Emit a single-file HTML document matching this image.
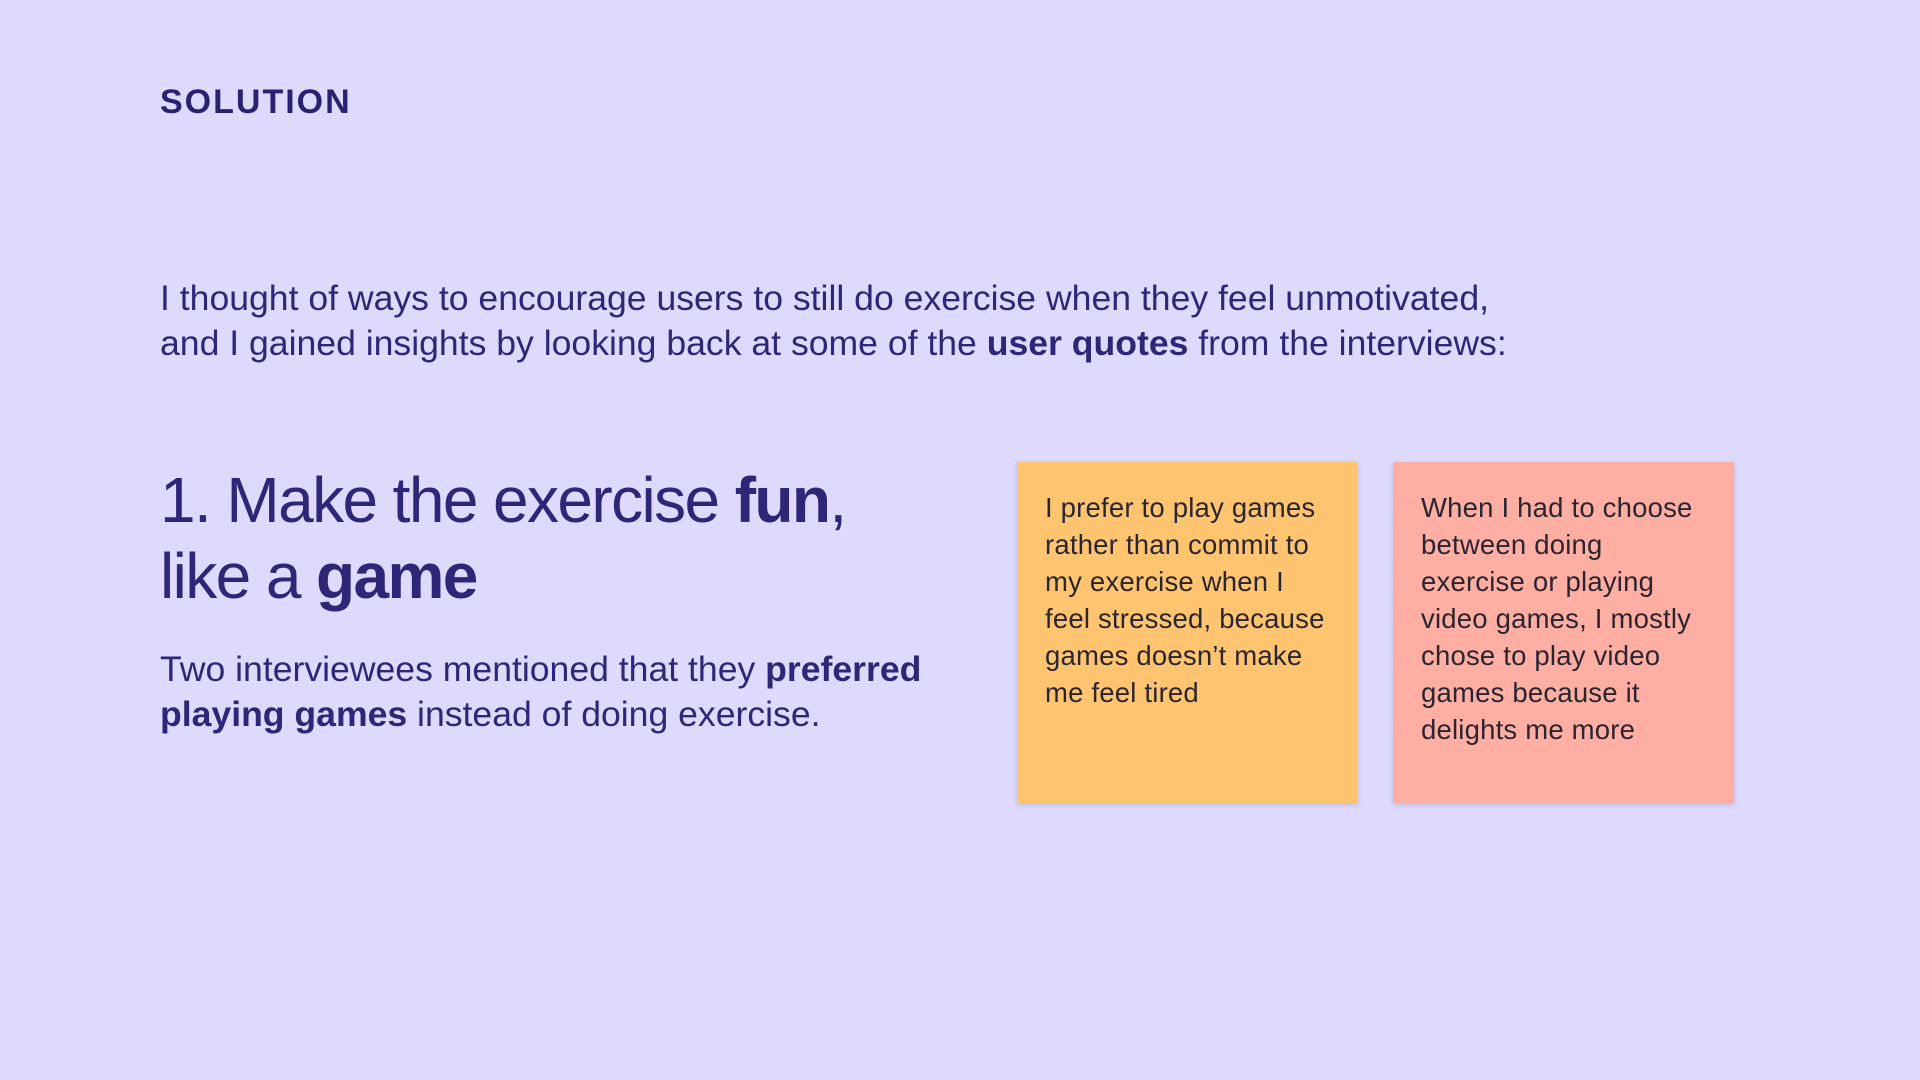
<!DOCTYPE html>
<html><head><meta charset="utf-8"><style>
html,body{margin:0;padding:0}
body{width:1920px;height:1080px;background:#dedafe;font-family:"Liberation Sans",sans-serif;color:#2e2677;position:relative;overflow:hidden}
.t{position:absolute;left:160px;top:83px;font-size:34px;font-weight:bold;letter-spacing:2px;color:#2a2170}
.p{position:absolute;left:160px;top:276px;font-size:35.6px;line-height:45px;white-space:nowrap}
.h{position:absolute;left:160px;top:462px;font-size:64px;line-height:76px;letter-spacing:-1.6px;white-space:nowrap}
.s{position:absolute;left:160px;top:647px;font-size:35.6px;line-height:45px;white-space:nowrap}
.n{position:absolute;top:462px;width:341px;height:341px;box-sizing:border-box;padding:27px 28px;font-size:27.5px;letter-spacing:0.2px;line-height:37px;color:#2b2530;box-shadow:0 2px 5px rgba(0,0,0,0.15)}
b{font-weight:bold}
</style></head><body>
<div class="t">SOLUTION</div>
<div class="p">I thought of ways to encourage users to still do exercise when they feel unmotivated,<br>and I gained insights by looking back at some of the <b>user quotes</b> from the interviews:</div>
<div class="h">1. Make the exercise <b>fun</b>,<br>like a <b>game</b></div>
<div class="s">Two interviewees mentioned that they <b>preferred</b><br><b>playing games</b> instead of doing exercise.</div>
<div class="n" style="left:1017px;background:#fec470">I prefer to play games<br>rather than commit to<br>my exercise when I<br>feel stressed, because<br>games doesn’t make<br>me feel tired</div>
<div class="n" style="left:1393px;background:#feaea2">When I had to choose<br>between doing<br>exercise or playing<br>video games, I mostly<br>chose to play video<br>games because it<br>delights me more</div>
</body></html>
